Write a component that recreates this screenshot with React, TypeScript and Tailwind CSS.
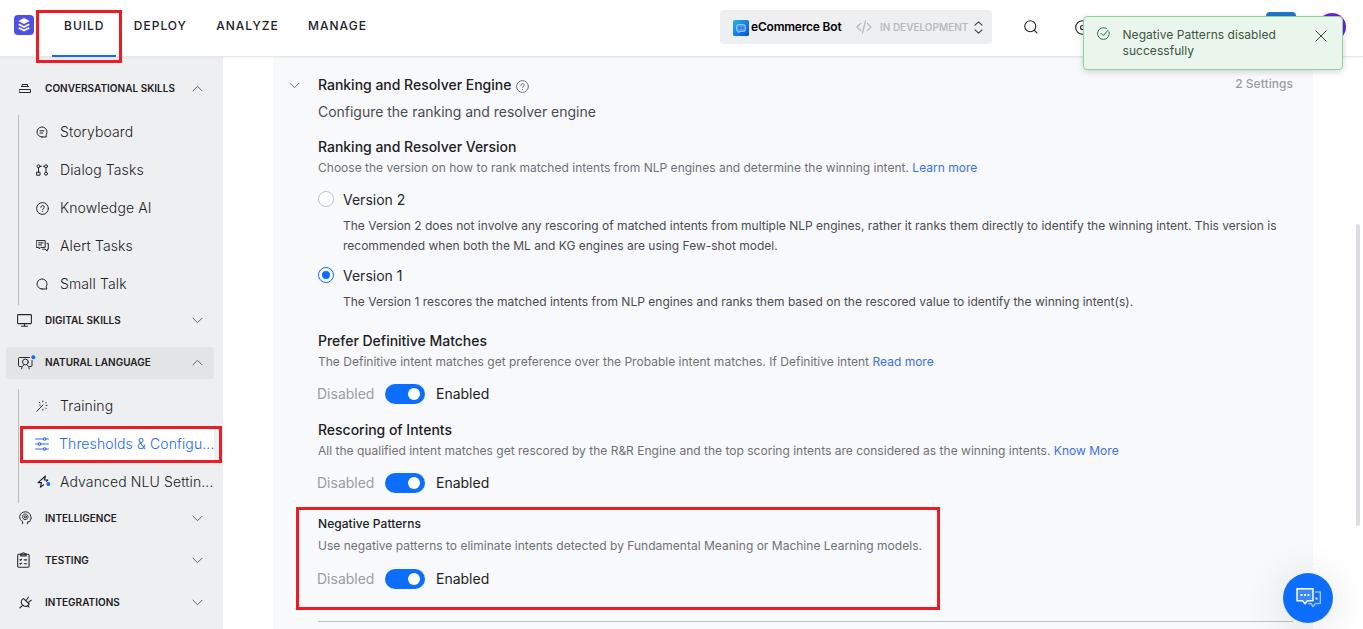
import type { ReactNode } from "react";

type IconProps = { children: ReactNode; w?: number; h?: number; className?: string; sw?: number };

function Svg({ children, w = 14, h = 14, className = "", sw = 1 }: IconProps) {
  return (
    <svg
      width={w}
      height={h}
      viewBox={`0 0 ${w} ${h}`}
      fill="none"
      stroke="currentColor"
      strokeWidth={sw}
      strokeLinecap="round"
      strokeLinejoin="round"
      className={`shrink-0 ${className}`}
    >
      {children}
    </svg>
  );
}

const ChevronUp = () => (
  <Svg w={11} h={7} className="text-[#5f6368]">
    <path d="M1 5.8 5.5 1.3 10 5.8" />
  </Svg>
);
const ChevronDown = () => (
  <Svg w={11} h={7} className="text-[#5f6368]">
    <path d="M1 1.2 5.5 5.7 10 1.2" />
  </Svg>
);

const icons = {
  skills: (
    <Svg w={12} h={9} className="ml-px">
      <path d="M3.5.5h5v2h-5zM2.5 2.5h7M.5 5.5h11v3H.5z" />
    </Svg>
  ),
  monitor: (
    <Svg w={15} h={13} sw={1.1} className="-ml-px">
      <rect x=".6" y=".6" width="13.8" height="9" rx=".8" />
      <path d="M7.5 9.8v2M4.5 12.2h6" />
    </Svg>
  ),
  language: (
    <Svg w={18} h={15}>
      <path d="M11.5 2.5h-10a1 1 0 0 0-1 1v7a1 1 0 0 0 1 1h2M14 5.500v5a1 1 0 0 1-1 1h-1.500" />
      <circle cx="7.400" cy="7" r="2.900" />
      <path d="M3.600 13.800c.2-1.800.9-2.900 2-3.600M11.200 13.800c-.2-1.800-.9-2.900-2-3.600" />
      <circle cx="15.300" cy="2.200" r="2" fill="#0d6efd" stroke="none" />
    </Svg>
  ),
  head: (
    <Svg w={13} h={14} className="ml-[0.5px]">
      <path d="M3.600 12.800v-2.300C1.700 9.500.7 7.800.7 5.900.7 3 3.200.8 6.300.8s5.200 2 5.500 4.700l.5 2.500-1.100.3v1.500c0 .6-.4 1-1 1H8.600v2" />
      <circle cx="6.300" cy="5.800" r="1.100" />
      <circle cx="6.300" cy="5.800" r="2.800" strokeDasharray="1.600 .8" />
    </Svg>
  ),
  clipboard: (
    <Svg w={13} h={16} sw={1.1} className="-ml-px">
      <rect x=".7" y="2.200" width="11.400" height="13" rx="1.200" />
      <path d="M3.700 1.900h1.300C5.200.9 5.700.7 6.400.7s1.200.2 1.400 1.200h1.300v2H3.700z" />
      <path d="m2.900 7.600.7.700 1-1.200M7.200 7.900h2.500M2.900 11.500l.7.700 1-1.200M7.200 11.800h2.500" />
    </Svg>
  ),
  plug: (
    <Svg w={13} h={13} sw={1.1} className="ml-[0.5px]">
      <path d="M4.600 2.600C2.300 3.600 1.600 6.300 3 8.400l.8.900 1.100.7c2 .9 4.500.1 5.300-2L4.600 2.600ZM3.600 9.400.8 12M6.900 4.800 9.400 1.200M8.900 6.600l3.300-2.400M8.800 9.900l1.200 1.200" />
    </Svg>
  ),
  story: (
    <Svg w={12} h={12}>
      <path d="M6 11a5 5 0 1 1 4.200-2.300V11H6ZM4 4.800h4M4 7h2.600" />
    </Svg>
  ),
  dialog: (
    <Svg w={13} h={12}>
      <circle cx="2.500" cy="2.300" r="1.500" />
      <circle cx="10" cy="2.300" r="1.500" />
      <rect x="1" y="8.200" width="3" height="3" />
      <circle cx="10" cy="9.700" r="1.500" />
      <path d="M2.500 3.800v4.400M10 3.800v4.400M4 2.300h1.300M7.300 2.300h1.200" />
    </Svg>
  ),
  question: (
    <Svg w={13} h={13}>
      <circle cx="6.500" cy="6.500" r="5.900" />
      <path d="M4.900 5.300c0-1 .7-1.700 1.700-1.700s1.700.6 1.700 1.500c0 1.200-1.700 1.300-1.700 2.500M6.600 9.400v.1" />
    </Svg>
  ),
  alert: (
    <Svg w={13} h={12}>
      <path d="M.6.6h8.600v6.800H4.800L3.200 9V7.400H.6zM2.600 2.900h4.600M2.600 4.900h3M11 3.400h1.300v5.800h-1.100v1.900l-2-1.900H6.600" />
    </Svg>
  ),
  talk: (
    <Svg w={12} h={12}>
      <path d="M6 11a5 5 0 1 1 4.200-2.300l.7 2.300H6Z" />
    </Svg>
  ),
  wand: (
    <Svg w={12} h={12}>
      <path d="M.7 11.300 7 5M6.800 1v.8M3.400 2.400l.6.600M10.200 2.400l-.6.600M11 5.400h-.8M10.200 8.600l-.6-.6M6.900 9.300v.8M4.300 5.200h-.600" />
    </Svg>
  ),
  sliders: (
    <Svg w={14} h={14} sw={1.1} className="-ml-px">
      <path d="M.6 2h7.700M10.900 2h2.500M.6 7h2.700M5.900 7h7.500M.6 12h7.700M10.900 12h2.500" />
      <circle cx="9.600" cy="2" r="1.200" />
      <circle cx="4.600" cy="7" r="1.200" />
      <circle cx="9.600" cy="12" r="1.200" />
    </Svg>
  ),
  bolt: (
    <Svg w={14} h={14} sw={1.1} className="ml-px">
      <path d="M8.500 1 1 7.600h3.600L3.300 12.200 6.600 9.800M8.500 1 7.400 5h3.400L9.500 6.300" />
      <circle cx="11.300" cy="9" r="2" fill="#0d6efd" stroke="none" />
    </Svg>
  ),
};

function Section({ icon, label, open, active }: { icon: ReactNode; label: string; open?: boolean; active?: boolean }) {
  return (
    <div
      className={`ml-1.5 flex w-[208px] items-center rounded pr-[11px] ${active ? "h-8 bg-[#e3e4e6] pb-0.5" : "h-[30px]"}`}
    >
      <span className="flex w-[39px] pl-3">{icon}</span>
      <span className="flex-1 text-[10px] font-semibold leading-4 tracking-[0.02px] text-[#202124]">{label}</span>
      {open ? <ChevronUp /> : <ChevronDown />}
    </div>
  );
}

function Item({ icon, label, active }: { icon: ReactNode; label: string; active?: boolean }) {
  return (
    <div className="h-[38px]">
      <div
        className={`flex h-9 w-[195px] items-center whitespace-nowrap ${active ? "bg-white text-[#2368f5]" : "text-[#202226]"}`}
      >
        <span className="ml-[17px] flex w-3.5">{icon}</span>
        <span className="ml-2.5 text-sm font-light leading-5 tracking-[0.12px]">{label}</span>
      </div>
    </div>
  );
}

function Tab({ label, active }: { label: string; active?: boolean }) {
  return (
    <div
      className={`flex h-[57px] border-b-2 px-3 pt-4 text-xs font-medium leading-5 tracking-[1px] text-[#202124] ${active ? "border-[#0d6efd]" : "border-transparent"}`}
    >
      {label}
    </div>
  );
}

function Toggle() {
  return (
    <div className="-ml-px flex h-5 items-center text-sm leading-5">
      <span className="w-[68px] text-[#9b9da3]">Disabled</span>
      <span className="flex h-5 w-10 items-center justify-end rounded-full bg-[#0d6efd] pr-[5px]">
        <span className="size-3 rounded-full bg-white" />
      </span>
      <span className="ml-[11px] text-[#202124]">Enabled</span>
    </div>
  );
}

function Radio({ label, checked }: { label: string; checked?: boolean }) {
  return (
    <div className="flex h-5 items-center">
      <span
        className={`-mt-0.5 flex size-4 items-center justify-center rounded-full border bg-white ${checked ? "border-[#0d6efd]" : "border-[#bdc1c6]"}`}
      >
        {checked && <span className="size-2 rounded-full bg-[#0d6efd]" />}
      </span>
      <span className="ml-[9px] text-sm leading-5 text-[#26282c]">{label}</span>
    </div>
  );
}

function Header() {
  return (
    <header className="relative z-10 flex h-[57px] shrink-0 border-b border-[#e6e7e9] bg-white shadow-[0_1px_2px_rgba(0,0,0,0.05)]">
      <div className="ml-3.5 mt-[15px] flex size-5 items-center justify-center rounded bg-[#4d50e0] text-white">
        <svg width="14" height="16" viewBox="0 0 14 16" fill="none" stroke="white">
          <path d="M7 1 12.600 4 7 7 1.400 4Z" fill="white" stroke="none" />
          <path d="m1.700 7.200 5.300 2.800 5.300-2.800M1.700 10.700l5.300 2.800 5.300-2.800" strokeWidth="1.800" />
        </svg>
      </div>
      <nav className="ml-[18px] flex gap-[5.3px]">
        <Tab label="BUILD" active />
        <Tab label="DEPLOY" />
        <Tab label="ANALYZE" />
        <Tab label="MANAGE" />
      </nav>
      <div className="ml-auto mr-[371px] mt-2.5 flex h-[34px] w-[272px] items-center rounded bg-[#eeeff1] pl-[13px]">
        <svg width="16" height="16" viewBox="0 0 16 16" className="mt-px shrink-0">
          <defs>
            <linearGradient id="bot" x1="0" y1="0" x2="1" y2="1">
              <stop offset="0" stopColor="#22b8ee" />
              <stop offset="1" stopColor="#0a4ce0" />
            </linearGradient>
          </defs>
          <rect width="16" height="16" rx="1.500" fill="url(#bot)" />
          <path
            d="M5.500 4.500h5a2 2 0 0 1 2 2v3a2 2 0 0 1-2 2H7l-1.500 1v-1a2 2 0 0 1-2-2v-3a2 2 0 0 1 2-2Z"
            fill="#4c9cf5"
            stroke="#a5d3fc"
            strokeWidth=".9"
          />
          <circle cx="6.400" cy="8" r="1" fill="#1767e0" />
          <circle cx="9.700" cy="8" r="1" fill="#1767e0" />
        </svg>
        <span className="ml-0.5 w-[105px] whitespace-nowrap text-xs font-semibold leading-5 tracking-[-0.2px] text-black">
          eCommerce Bot
        </span>
        <Svg w={16} h={14} sw={1.3} className="text-[#b9bbc0]">
          <path d="M4.700 3.500.9 7l3.800 3.500M11.300 3.500 15.100 7l-3.800 3.500M9.400 1 6.600 13" />
        </Svg>
        <span className="ml-2 w-[94px] whitespace-nowrap text-[10px] font-semibold leading-5 text-[#b9bbc0]">
          IN DEVELOPMENT
        </span>
        <Svg w={9} h={13} sw={1.1} className="text-[#3c4043]">
          <path d="M1 4.200 4.500.8 8 4.200M1 8.800l3.500 3.400L8 8.800" />
        </Svg>
      </div>
      <Svg w={14} h={14} sw={1.1} className="absolute left-[1024px] top-5 text-[#202124]">
        <circle cx="6.300" cy="6.300" r="5.500" />
        <path d="m10.300 10.300 2.600 2.600" />
      </Svg>
      <Svg w={15} h={15} sw={1.1} className="absolute left-[1075px] top-5 text-[#202124]">
        <circle cx="7.500" cy="7.500" r="6.800" />
        <circle cx="7.500" cy="7.500" r="2" />
      </Svg>
      <div className="absolute left-[1266px] top-3 h-[30px] w-[30px] rounded-sm bg-[#1f75cb]" />
      <div className="absolute left-[1318px] top-[13px] size-7 rounded-full bg-[#6b21dc]" />
    </header>
  );
}

function Sidebar() {
  return (
    <aside className="flex w-[223px] shrink-0 flex-col bg-[#eeeff1] pt-4 text-[#26282c]">
      <Section icon={icons.skills} label="CONVERSATIONAL SKILLS" open />
      <div className="ml-[18px] mt-3 h-[190px] shrink-0 border-l border-[#b9bbbf]">
        <div className="-mt-px">
          <Item icon={icons.story} label="Storyboard" />
          <Item icon={icons.dialog} label="Dialog Tasks" />
          <Item icon={icons.question} label="Knowledge AI" />
          <Item icon={icons.alert} label="Alert Tasks" />
          <Item icon={icons.talk} label="Small Talk" />
        </div>
      </div>
      <Section icon={icons.monitor} label="DIGITAL SKILLS" />
      <div className="h-3" />
      <Section icon={icons.language} label="NATURAL LANGUAGE" open active />
      <div className="ml-[18px] mt-2.5 h-[114px] shrink-0 border-l border-[#b9bbbf]">
        <div className="-mt-px">
          <Item icon={icons.wand} label="Training" />
          <Item icon={icons.sliders} label="Thresholds & Configu..." active />
          <Item icon={icons.bolt} label="Advanced NLU Settin..." />
        </div>
      </div>
      <div className="flex flex-col gap-3">
        <Section icon={icons.head} label="INTELLIGENCE" />
        <Section icon={icons.clipboard} label="TESTING" />
        <Section icon={icons.plug} label="INTEGRATIONS" />
      </div>
    </aside>
  );
}

const titleCls = "h-5 text-sm font-medium leading-5 tracking-[-0.02px] text-[#202124]";
const noteCls = "whitespace-nowrap text-xs leading-5 tracking-[0.015px] text-[#6f7177]";
const linkCls = "text-[#3b6ef6]";

function Settings() {
  return (
    <main className="flex-1 bg-white pl-[50px]">
      <div className="flex h-full w-[1040px] bg-[#f8f9fb] pl-4 pr-5 pt-[18px]">
        <div className="w-[29px] shrink-0 pt-[7px]">
          <ChevronDown />
        </div>
        <div className="flex-1">
          <div className="flex h-5 items-center">
            <h2 className={titleCls}>Ranking and Resolver Engine</h2>
            <span className="ml-[5px] mt-[3px] text-[#6f7177]">{icons.question}</span>
            <span className="ml-auto -mt-0.5 text-xs font-medium leading-5 tracking-[0.05px] text-[#9b9da3]">
              2 Settings
            </span>
          </div>
          <p className="mt-[7px] text-sm leading-5 tracking-[-0.02px] text-[#4a4c51]">
            Configure the ranking and resolver engine
          </p>

          <h3 className={`mt-[15px] ${titleCls}`}>Ranking and Resolver Version</h3>
          <p className={`mt-px ${noteCls}`}>
            Choose the version on how to rank matched intents from NLP engines and determine the winning intent.{" "}
            <a className={linkCls}>Learn more</a>
          </p>
          <div className="mt-3">
            <Radio label="Version 2" />
            <p className="ml-[25px] mt-1.5 w-[940px] text-xs leading-5 text-[#4a4c51]">
              The Version 2 does not involve any rescoring of matched intents from multiple NLP engines, rather it ranks
              them directly to identify the winning intent. This version is recommended when both the ML and KG engines
              are using Few-shot model.
            </p>
          </div>
          <div className="mt-2.5">
            <Radio label="Version 1" checked />
            <p className="ml-[25px] mt-1.5 text-xs leading-5 tracking-[0.015px] text-[#4a4c51]">
              The Version 1 rescores the matched intents from NLP engines and ranks them based on the rescored value to
              identify the winning intent(s).
            </p>
          </div>

          <h3 className={`mt-[19px] ${titleCls}`}>Prefer Definitive Matches</h3>
          <p className={`mb-3 mt-px ${noteCls}`}>
            The Definitive intent matches get preference over the Probable intent matches. If Definitive intent{" "}
            <a className={linkCls}>Read more</a>
          </p>
          <Toggle />

          <h3 className={`mt-4 ${titleCls}`}>Rescoring of Intents</h3>
          <p className={`mb-3 mt-px ${noteCls}`}>
            All the qualified intent matches get rescored by the R&amp;R Engine and the top scoring intents are
            considered as the winning intents. <a className={linkCls}>Know More</a>
          </p>
          <Toggle />

          <h3 className="mt-[21px] text-xs font-medium leading-5 tracking-[0.05px] text-[#202124]">
            Negative Patterns
          </h3>
          <p className={`mb-[13px] mt-0.5 ${noteCls}`}>
            Use negative patterns to eliminate intents detected by Fundamental Meaning or Machine Learning models.
          </p>
          <Toggle />
          <div className="mt-8 h-px bg-[#bdbfc3]" />
        </div>
      </div>
    </main>
  );
}

function Toast() {
  return (
    <div className="absolute left-[1083px] top-4 z-20 flex h-[54px] w-[260px] rounded border border-[#8fd19e] bg-[#eaf5ec] pl-[13px] pt-2.5 text-[#3a5542] shadow-[0_2px_6px_rgba(0,0,0,0.16)]">
      <Svg w={13} h={13} className="text-[#2f7045]">
        <path d="M12.100 4.800a5.900 5.900 0 1 1-2.700-3.400M4 6.300l2.200 2.200 5-5.400" />
      </Svg>
      <p className="ml-[12.5px] w-[175px] text-xs leading-4 tracking-[0.05px]">
        Negative Patterns disabled successfully
      </p>
      <Svg w={12} h={12} className="ml-[17.5px] mt-[3px] text-[#3c4043]">
        <path d="m.8.8 10.400 10.400M11.200.8.8 11.200" />
      </Svg>
    </div>
  );
}

function ChatButton() {
  return (
    <button className="absolute left-[1283px] top-[573px] z-20 flex size-[50px] items-center justify-center rounded-full bg-[#0d6efd] pl-px shadow-[0_4px_40px_rgba(0,0,0,0.13)]">
      <svg width="26" height="20" viewBox="0 0 26 20" fill="none" strokeWidth="1.400" strokeLinejoin="round">
        <path d="M19 4h5.300v11.500h-4.800l-2.500 3-2-3h-3" stroke="#9cc4fe" />
        <path d="M1 .8h16v12h-5.600L9 15.800l-2.400-3H1Z" fill="#3a88fd" stroke="white" strokeWidth="1.500" />
        <path d="M4.500 6h2v2h-2zM8 6h2v2H8zM11.500 6h2v2h-2zM19.500 9.400h2v2h-2z" fill="white" />
      </svg>
    </button>
  );
}

export default function App() {
  return (
    <div className="relative flex h-[629px] w-[1363px] flex-col overflow-hidden bg-white font-['Inter',sans-serif]">
      <Header />
      <div className="flex min-h-0 flex-1">
        <Sidebar />
        <Settings />
      </div>
      <div className="absolute left-[1356px] top-[224px] h-[302px] w-1 rounded-sm bg-[#dcdde0]" />
      <div className="absolute left-9 top-2.5 z-30 h-[53px] w-[86px] border-[3px] border-[#ed1c24]" />
      <div className="absolute left-5 top-[426px] z-30 h-[37px] w-[202px] border-[3px] border-[#ed1c24]" />
      <div className="absolute left-[296px] top-[507px] z-30 h-[103px] w-[644px] border-[3px] border-[#ed1c24]" />
      <Toast />
      <ChatButton />
    </div>
  );
}
